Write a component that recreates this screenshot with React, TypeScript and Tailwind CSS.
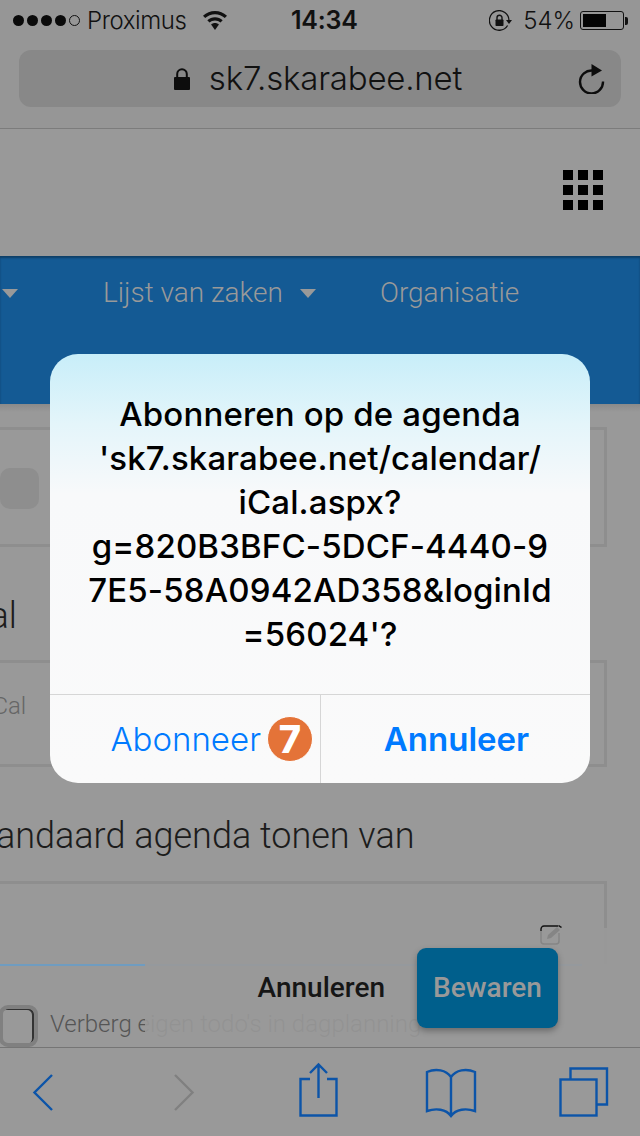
const roboto = { fontFamily: 'Roboto, sans-serif' };

function Wifi() {
  return (
    <svg width="24" height="19" viewBox="0 0 24 19" fill="#111">
      <path d="M12 0C7.4 0 3.4 1.7 0 4.7l2.2 2.4C5 4.6 8.3 3.2 12 3.2s7 1.4 9.8 3.9L24 4.7C20.6 1.7 16.6 0 12 0z" />
      <path d="M12 6.2c-2.9 0-5.5 1-7.7 3l2.2 2.4c1.5-1.3 3.4-2.1 5.5-2.1s4 .8 5.5 2.1l2.2-2.4c-2.2-2-4.8-3-7.7-3z" />
      <path d="M12 12c-1.5 0-2.8.5-3.9 1.5L12 19l3.9-5.5C14.8 12.5 13.5 12 12 12z" />
    </svg>
  );
}

function RotationLock() {
  return (
    <svg width="24" height="22" viewBox="0 0 24 22" fill="none">
      <path d="M18.6 15.5A9.8 9.8 0 1 1 20 10.5" stroke="#111" strokeWidth="1.3" />
      <path d="M17 10h6l-3 4z" fill="#111" />
      <rect x="6.5" y="9.5" width="8" height="6.5" rx="0.8" fill="#111" />
      <path d="M8 10V7.8a2.5 2.5 0 0 1 5 0V10" stroke="#111" strokeWidth="1.4" />
    </svg>
  );
}

function Battery() {
  return (
    <div className="flex items-center">
      <div className="w-[44px] h-[19px] rounded-[3px] border border-[#111] p-[2px]">
        <div className="w-[23px] h-full bg-[#050505]" />
      </div>
      <div className="w-[3px] h-[8px] ml-[1px] bg-[#111] rounded-r-[2px]" />
    </div>
  );
}

function Padlock() {
  return (
    <svg width="16" height="22" viewBox="0 0 16 22" fill="none">
      <rect x="0" y="9" width="16" height="13" rx="1" fill="#0d0d0d" />
      <path d="M3.2 10V6a4.8 4.8 0 0 1 9.6 0v4" stroke="#0d0d0d" strokeWidth="2" />
    </svg>
  );
}

function Reload() {
  return (
    <svg width="28" height="30" viewBox="0 0 28 30" fill="none">
      <path d="M15.5 6.5A11.5 11.5 0 1 0 26 17.5" stroke="#0d0d0d" strokeWidth="2.4" />
      <path d="M14.5 0 L25 6.5 L14.5 12.5z" fill="#0d0d0d" />
    </svg>
  );
}

function AppGrid() {
  return (
    <div className="grid grid-cols-[10px_10px_10px] grid-rows-[10px_10px_10px] gap-[5px]">
      {Array.from({ length: 9 }).map((_, i) => (
        <div key={i} className="bg-black" />
      ))}
    </div>
  );
}

function Caret() {
  return <div className="w-0 h-0 border-x-[8px] border-x-transparent border-t-[9px] border-t-[#999999]" />;
}

function EditIcon() {
  return (
    <svg width="24" height="20" viewBox="0 0 24 20" fill="none">
      <path d="M1 6V4a3 3 0 0 1 3-3h14" stroke="#111" strokeWidth="1.4" />
      <path d="M1 6v10a3 3 0 0 0 3 3h12a3 3 0 0 0 3-3V8" stroke="#858585" strokeWidth="1.5" />
      <path d="M7 14l1-4 9-8 3 3-9 8z" fill="#858585" />
      <path d="M19 0l3 2-1 1-3-2z" fill="#111" />
    </svg>
  );
}

function ToolbarIcons() {
  const blue = '#0c54a8';
  return (
    <svg width="640" height="88" viewBox="0 0 640 88" fill="none" strokeWidth="2.4">
      <path d="M52 27 L34.5 44.5 L52 62" stroke={blue} />
      <path d="M175 27 L192.5 44.5 L175 62" stroke="#808080" />
      <path d="M310 31 H300.5 V67.5 H336.5 V31 H327" stroke={blue} />
      <path d="M318.5 17 V50 M310 25 L318.5 16.5 L327 25" stroke={blue} />
      <path
        d="M451 29 C446 22 436 20 427 24 V63 C436 60 446 61 451 68 C456 61 466 60 475 63 V24 C466 20 456 22 451 29 Z M451 29 V68"
        stroke={blue}
      />
      <rect x="560.5" y="31.5" width="36" height="36" stroke={blue} />
      <path d="M570.5 31 V20.5 H607 V56.5 H597" stroke={blue} />
    </svg>
  );
}

export default function App() {
  return (
    <div className="relative w-[640px] h-[1136px] overflow-hidden bg-[#999999] flex flex-col text-[#111]">
      {/* safari chrome */}
      <div className="h-[129px] shrink-0 bg-[#969696] border-b border-[#7c7c7c]">
        <div className="h-[41px] flex items-center pl-[13px] pr-[12px] text-[24px] font-['Inter',sans-serif] leading-none">
          <div className="flex items-center gap-[3px] w-[278px]">
            {[0, 1, 2, 3].map((i) => (
              <div key={i} className="w-[11px] h-[11px] rounded-full bg-[#0a0a0a]" />
            ))}
            <div className="w-[11px] h-[11px] rounded-full border border-[#111]" />
            <span className="ml-[4px] font-light tracking-[-0.4px]">Proximus</span>
            <span className="ml-[13px]">
              <Wifi />
            </span>
          </div>
          <span className="font-semibold text-[25px] tracking-[-0.2px]">14:34</span>
          <div className="ml-auto flex items-center">
            <RotationLock />
            <span className="ml-[10px] mr-[5px] font-light">54%</span>
            <Battery />
          </div>
        </div>
        <div className="relative mt-[9px] mx-[19px] h-[57px] rounded-[12px] bg-[#888888] flex items-center justify-center pr-[4px]">
          <Padlock />
          <span className="ml-[19px] text-[33px] leading-none font-['Inter',sans-serif] font-light tracking-[-0.2px]">
            sk7.skarabee.net
          </span>
          <span className="absolute left-[558px] top-[14px]">
            <Reload />
          </span>
        </div>
      </div>

      {/* site header */}
      <div className="h-[127px] shrink-0 flex items-center justify-end pr-[37px] pb-[5px]">
        <AppGrid />
      </div>

      {/* blue nav */}
      <div
        className="h-[148px] shrink-0 bg-[#145a94] shadow-[inset_0_2px_2px_rgba(0,0,0,0.3)] pt-[17px] text-[28px] font-light text-[#999999]"
        style={roboto}
      >
        <div className="h-[40px] flex items-center pl-[2px]">
          <Caret />
          <span className="ml-[85px]">Lijst van zaken</span>
          <span className="ml-[17px]">
            <Caret />
          </span>
          <span className="ml-[64px]">Organisatie</span>
        </div>
      </div>

      {/* form behind the alert */}
      <div
        className="flex-1 min-h-0 bg-[linear-gradient(#8a8a8a,#999999_8px)] pt-[23px] overflow-hidden"
        style={roboto}
      >
        <div className="h-[120px] mr-[33px] border-[3px] border-l-0 border-[#8e8e8e] flex items-center">
          <div className="w-[39px] h-[41px] mt-[2px] rounded-[10px] bg-[#8e8e8e]" />
        </div>
        <div className="h-[113px] flex items-center text-[36px] font-light text-[#1c1c1c] pt-[25px]">
          <span className="ml-[-42px]">iCal</span>
        </div>
        <div className="h-[107px] mr-[33px] border-[3px] border-l-0 border-[#8e8e8e] flex items-center text-[24px] font-light text-[#666666]">
          <span className="ml-[-13px] mt-[-16px]">iCal</span>
        </div>
        <div className="h-[114px] whitespace-nowrap text-[36px] leading-[40px] font-light text-[#1c1c1c] pt-[49px]">
          <span className="ml-[-37px]">Standaard agenda tonen van</span>
        </div>
        <div className="h-[83px] mr-[33px] border-t-[3px] border-r-[3px] border-[#8e8e8e]">
          <span className="absolute z-10 left-[540px] top-[925px]">
            <EditIcon />
          </span>
        </div>
        <div className="h-[2px] w-[582px] bg-[#6f9cc0]" />
        <div className="flex items-start mt-[39px] h-[42px] text-[24px] leading-[38px] font-light text-[#555555]">
          <div className="w-[39px] h-[42px] ml-[-1px] shrink-0 rounded-[9px] border-[4px] border-[#808080] shadow-[inset_-2px_1px_0_#333]" />
          <span className="ml-[12px]">Verberg eigen todo's in dagplanning</span>
        </div>
      </div>

      {/* toolbar */}
      <div className="h-[89px] shrink-0 border-t border-[#757575] bg-[#999999]">
        <ToolbarIcons />
      </div>

      {/* sticky save bar */}
      <div
        className="absolute left-[145px] right-0 top-[928px] h-[119px] bg-[#999999]/90 flex items-start pt-[20px]"
        style={roboto}
      >
        <div className="w-[272px] h-[80px] pr-[32px] flex items-center justify-end text-[28px] font-medium text-[#161616]">
          Annuleren
        </div>
        <div className="w-[141px] h-[80px] rounded-[9px] bg-[#005f8c] shadow-[0_3px_6px_rgba(0,0,0,0.3)] flex items-center justify-center text-[28px] font-medium text-[#999999]">
          Bewaren
        </div>
      </div>

      {/* alert */}
      <div className="absolute left-[50px] top-[354px] w-[540px] h-[429px] rounded-[28px] overflow-hidden bg-[linear-gradient(#c8eef9_0px,#e4f5fa_70px,#f8f9fa_140px,#fafafa_100%)] flex flex-col font-['Inter',sans-serif]">
        <div className="h-[340px] pt-[38px] text-center text-[33px] leading-[44px] font-medium tracking-[0.15px] text-black">
          Abonneren op de agenda
          <br />
          'sk7.skarabee.net/calendar/
          <br />
          iCal.aspx?
          <br />
          g=820B3BFC-5DCF-4440-9
          <br />
          7E5-58A0942AD358&amp;loginId
          <br />
          =56024'?
        </div>
        <div className="flex-1 flex border-t border-[#d6d6d6] text-[33px] text-[#007aff]">
          <div className="w-[271px] border-r border-[#d6d6d6] flex items-center justify-end pr-[7px]">
            <span className="font-light pt-[1px]">Abonneer</span>
            <div className="ml-[6px] w-[46px] h-[46px] rounded-full bg-[#e47338] border border-white flex items-center justify-center text-[38px] font-extrabold text-white">
              7
            </div>
          </div>
          <div className="flex-1 flex items-center justify-center font-semibold pl-[2px] pt-[1px]">Annuleer</div>
        </div>
      </div>
    </div>
  );
}
